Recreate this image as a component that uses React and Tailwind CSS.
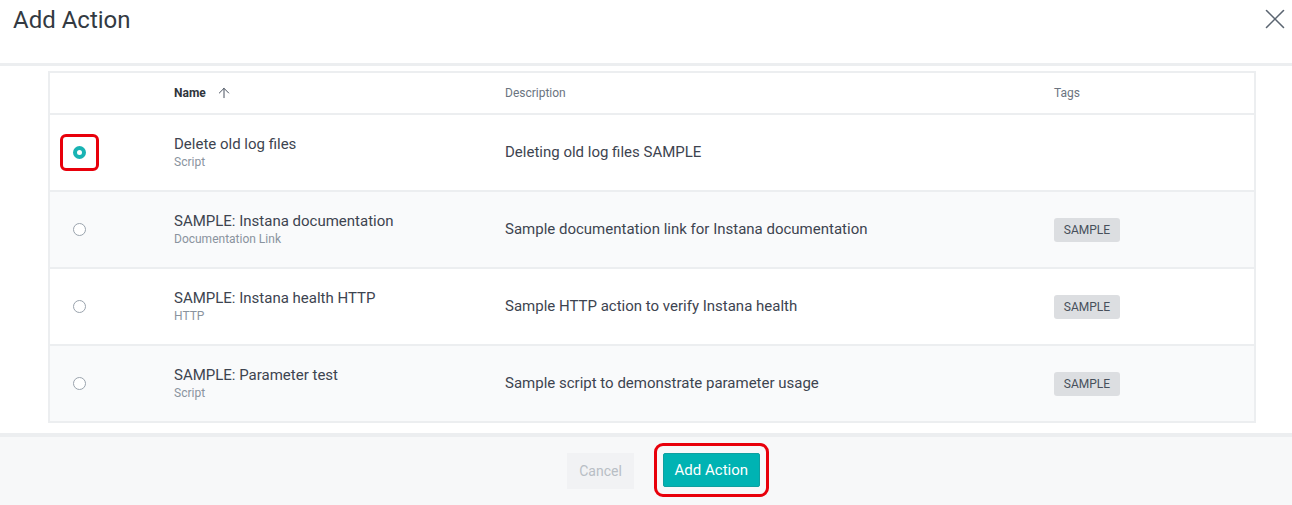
import { X, ArrowUp } from 'lucide-react';

const rows = [
    { name: 'Delete old log files', type: 'Script', desc: 'Deleting old log files SAMPLE', tag: null, selected: true },
    { name: 'SAMPLE: Instana documentation', type: 'Documentation Link', desc: 'Sample documentation link for Instana documentation', tag: 'SAMPLE' },
    { name: 'SAMPLE: Instana health HTTP', type: 'HTTP', desc: 'Sample HTTP action to verify Instana health', tag: 'SAMPLE' },
    { name: 'SAMPLE: Parameter test', type: 'Script', desc: 'Sample script to demonstrate parameter usage', tag: 'SAMPLE' },
];

const Radio = ({ selected }) =>
    selected ? (
        <div className="w-[39px] h-[37px] border-[3px] border-[#e8000b] rounded-[6px] flex items-center justify-center -ml-[13px]">
            <span className="w-[13px] h-[13px] rounded-full border-[4px] border-[#19b3b3] bg-white" />
        </div>
    ) : (
        <span className="w-[13px] h-[13px] rounded-full border border-[#9aa3ad] bg-white" />
    );

const App = () => {
    return (
        <div className="w-[1292px] h-[505px] bg-white flex flex-col overflow-hidden font-['Roboto',sans-serif] text-[#3d4450]">
            {/* header */}
            <div className="h-[63px] flex items-start justify-between pl-[13px] pr-[0px] pt-[5px]">
                <h1 className="text-[24px] leading-[30px] text-[#333a42]">Add Action</h1>
                <X size={34} strokeWidth={1.1} className="text-[#5b6571] -mt-[3px]" />
            </div>
            <div className="h-[3px] bg-[#eceef0]" />

            {/* table */}
            <div className="flex-1 px-[48px] pt-[5px]">
                <div className="w-[1208px] border-2 border-[#eceef0] border-b-0">
                    <div className="grid grid-cols-[124px_331px_549px_1fr] h-[42px] items-center border-b-2 border-[#eceef0] text-[12px]">
                        <div />
                        <div className="flex items-center gap-[10px] font-bold text-[#2f353c]">
                            Name <ArrowUp size={16} strokeWidth={1.5} className="text-[#4a5360]" />
                        </div>
                        <div className="text-[#6b7480]">Description</div>
                        <div className="text-[#6b7480]">Tags</div>
                    </div>
                    {rows.map((r, i) => (
                        <div
                            key={r.name}
                            className={`grid grid-cols-[124px_331px_549px_1fr] h-[77px] items-center border-b-2 border-[#eceef0] ${
                                i % 2 === 1 ? 'bg-[#f9fafb]' : 'bg-white'
                            }`}
                        >
                            <div className="pl-[23px] flex items-center">
                                <Radio selected={r.selected} />
                            </div>
                            <div className="flex flex-col">
                                <span className="text-[15px] leading-[19px]">{r.name}</span>
                                <span className="text-[12px] leading-[16px] text-[#8a939e]">{r.type}</span>
                            </div>
                            <div className="text-[15px]">{r.desc}</div>
                            <div>
                                {r.tag && (
                                    <span className="inline-flex items-center justify-center w-[66px] h-[24px] bg-[#dcdee1] text-[#47505b] text-[12px] rounded-[3px]">
                                        {r.tag}
                                    </span>
                                )}
                            </div>
                        </div>
                    ))}
                </div>
            </div>

            {/* footer */}
            <div className="h-[4px] bg-[#eceef0]" />
            <div className="h-[68px] bg-[#f7f8f9] flex items-start justify-center gap-[20px] pt-[6px] pl-[44px]">
                <button className="mt-[10px] h-[36px] px-[12px] text-[14px] text-[#b8bec5] bg-[#f1f2f4]">Cancel</button>
                <div className="w-[115px] h-[54px] border-[3px] border-[#e8000b] rounded-[9px] flex items-center justify-center">
                    <button className="w-[97px] h-[34px] bg-[#00b3b3] text-white text-[15px] rounded-[2px] border border-[#0fa0a0]">
                        Add Action
                    </button>
                </div>
            </div>
        </div>
    );
};

export default App;
